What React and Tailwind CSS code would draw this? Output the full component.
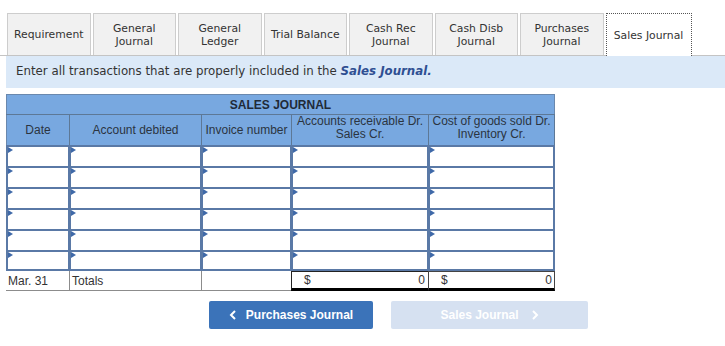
import React from "react";

const tabs = [
  ["Requirement"],
  ["General", "Journal"],
  ["General", "Ledger"],
  ["Trial Balance"],
  ["Cash Rec", "Journal"],
  ["Cash Disb", "Journal"],
  ["Purchases", "Journal"],
];

const cols = ["w-[63px]", "w-[132px]", "w-[90px]", "w-[137px]", "w-[127px]"];

function Marker() {
  return (
    <span className="absolute left-0 top-0 w-0 h-0 border-t-[3px] border-b-[3px] border-l-[5px] border-t-transparent border-b-transparent border-l-[#3f69a8]" />
  );
}

function InputRow({ last }) {
  return (
    <div className="flex h-[21px]">
      {cols.map((c, i) => (
        <div
          key={i}
          className={`${c} relative bg-white border-t-2 border-l-2 border-[#5a79a6] ${
            i === 4 ? "border-r-2" : "border-r"
          } ${last ? "border-b-2" : ""}`}
        >
          <Marker />
        </div>
      ))}
    </div>
  );
}

export default function App() {
  return (
    <div className="w-[725px] h-[346px] bg-white overflow-hidden">
      {/* Tabs */}
      <div className="pt-[13px] pl-[7px] flex gap-[2px] border-b border-[#c4c4c4] h-[56px] items-end font-['DejaVu_Sans',sans-serif] text-[10.8px] text-[#333] leading-[13px]">
        {tabs.map((t, i) => (
          <div
            key={i}
            className="w-[83.5px] h-[42px] bg-[#f1f1f1] border border-b-0 border-[#cdcdcd] flex flex-col items-center justify-center text-center"
          >
            {t.map((l, j) => (
              <span key={j}>{l}</span>
            ))}
          </div>
        ))}
        <div className="w-[86px] h-[43px] -mb-px bg-white border border-b-0 border-dotted border-[#555] flex items-center justify-center">
          Sales Journal
        </div>
      </div>

      {/* Instruction band */}
      <div className="ml-[6px] h-[32px] bg-[#dbe9f8] flex items-center pl-[10px] font-['DejaVu_Sans',sans-serif] text-[11.8px] text-[#333]">
        <span>
          Enter all transactions that are properly included in the{" "}
          <span className="font-bold italic text-[#2f4f92]">Sales Journal.</span>
        </span>
      </div>

      {/* Table */}
      <div className="ml-[6px] mt-[6px] w-[549px] font-['Liberation_Sans',Arial,sans-serif] text-[12px] text-[#2b3440]">
        <div className="h-[20px] bg-[#78a8e0] border border-b-0 border-[#6a88ad] flex items-center justify-center font-bold text-[#1f2a38]">
          SALES JOURNAL
        </div>
        <div className="flex h-[31px] bg-[#78a8e0] border-t border-[#5d7896] leading-[13px]">
          <div className="w-[63px] flex items-center justify-center border-l border-[#6a88ad]">Date</div>
          <div className="w-[132px] flex items-center justify-center border-l border-[#5d7896]">Account debited</div>
          <div className="w-[90px] flex items-center justify-center border-l border-[#5d7896]">Invoice number</div>
          <div className="w-[137px] flex flex-col items-center justify-center border-l border-[#5d7896] pb-[4px]">
            <span>Accounts receivable Dr.</span>
            <span>Sales Cr.</span>
          </div>
          <div className="w-[127px] flex flex-col items-center justify-center border-l border-r border-[#5d7896] pb-[4px]">
            <span>Cost of goods sold Dr.</span>
            <span>Inventory Cr.</span>
          </div>
        </div>
        {[0, 1, 2, 3, 4, 5].map((r) => (
          <InputRow key={r} last={r === 5} />
        ))}
        {/* Totals */}
        <div className="flex h-[20px] text-[#333]">
          <div className="w-[63px] border-b border-[#8c8c8c] flex items-center pl-[2px]">Mar. 31</div>
          <div className="w-[132px] border-l border-b border-[#8c8c8c] flex items-center pl-[2px]">Totals</div>
          <div className="w-[90px] border-l border-b border-[#8c8c8c]" />
          <div className="w-[137px] border-l border-t border-[#222] border-b-[3px] border-b-black flex items-center justify-between pl-[12px] pr-[3px]">
            <span>$</span>
            <span>0</span>
          </div>
          <div className="w-[127px] border-l border-r border-t border-[#444] border-b-[3px] border-b-black flex items-center justify-between pl-[12px] pr-[2px]">
            <span>$</span>
            <span>0</span>
          </div>
        </div>
      </div>

      {/* Buttons */}
      <div className="mt-[10px] ml-[209px] flex gap-[18px] font-['Liberation_Sans',Arial,sans-serif] text-[12px] font-bold text-white">
        <div className="w-[164px] h-[28px] bg-[#3b73b9] rounded-[2px] flex items-center justify-center gap-[9px]">
          <svg width="8" height="10" viewBox="0 0 8 10" fill="none" stroke="white" strokeWidth="2">
            <path d="M6 1 L2 5 L6 9" />
          </svg>
          <span>Purchases Journal</span>
        </div>
        <div className="w-[197px] h-[28px] bg-[#d6e1f1] rounded-[2px] flex items-center justify-center gap-[12px]">
          <span>Sales Journal</span>
          <svg width="8" height="10" viewBox="0 0 8 10" fill="none" stroke="white" strokeWidth="2">
            <path d="M2 1 L6 5 L2 9" />
          </svg>
        </div>
      </div>
    </div>
  );
}
